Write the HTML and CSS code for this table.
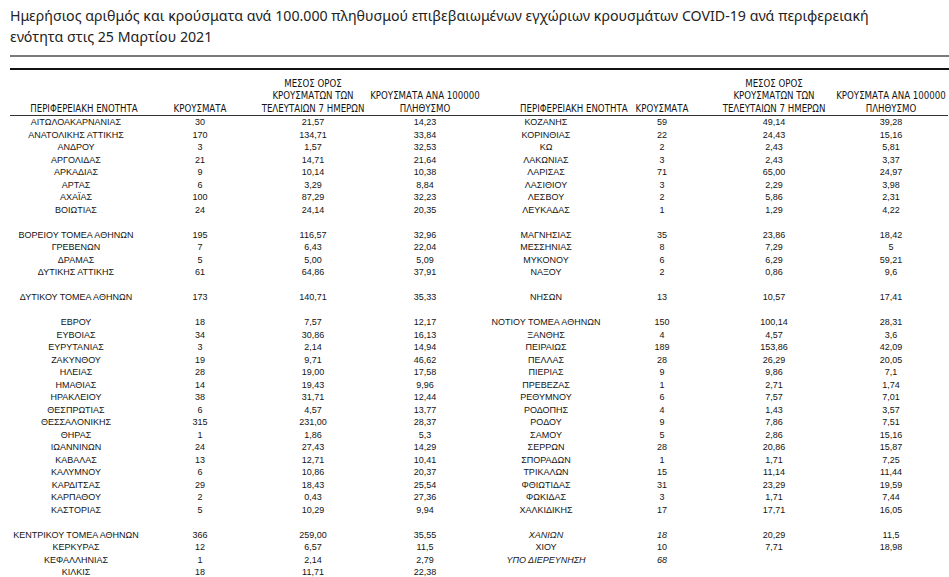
FILE: index.html
```html
<!DOCTYPE html>
<html lang="el">
<head>
<meta charset="utf-8">
<title>Κρούσματα COVID-19 ανά περιφερειακή ενότητα</title>
<link rel="stylesheet" href="styles.css">
</head>
<body>
<div class="page">
  <h1 class="title">Ημερήσιος αριθμός και κρούσματα ανά 100.000 πληθυσμού επιβεβαιωμένων εγχώριων κρουσμάτων COVID-19 ανά περιφερειακή<br>ενότητα στις 25 Μαρτίου 2021</h1>
  <div class="rule rule-thin"></div>
  <div class="rule rule-thick"></div>
  <table class="data">
    <colgroup>
      <col class="c1"><col class="c2"><col class="c3"><col class="c4">
      <col class="c5"><col class="c6"><col class="c7"><col class="c8">
    </colgroup>
    <thead>
      <tr>
        <th class="h-name">ΠΕΡΙΦΕΡΕΙΑΚΗ ΕΝΟΤΗΤΑ</th>
        <th>ΚΡΟΥΣΜΑΤΑ</th>
        <th>ΜΕΣΟΣ ΟΡΟΣ<br>ΚΡΟΥΣΜΑΤΩΝ ΤΩΝ<br>ΤΕΛΕΥΤΑΙΩΝ 7 ΗΜΕΡΩΝ</th>
        <th>ΚΡΟΥΣΜΑΤΑ ΑΝΑ 100000<br>ΠΛΗΘΥΣΜΟ</th>
        <th class="h-name2">ΠΕΡΙΦΕΡΕΙΑΚΗ ΕΝΟΤΗΤΑ</th>
        <th>ΚΡΟΥΣΜΑΤΑ</th>
        <th>ΜΕΣΟΣ ΟΡΟΣ<br>ΚΡΟΥΣΜΑΤΩΝ ΤΩΝ<br>ΤΕΛΕΥΤΑΙΩΝ 7 ΗΜΕΡΩΝ</th>
        <th>ΚΡΟΥΣΜΑΤΑ ΑΝΑ 100000<br>ΠΛΗΘΥΣΜΟ</th>
      </tr>
    </thead>
    <tbody>
      <tr><td>ΑΙΤΩΛΟΑΚΑΡΝΑΝΙΑΣ</td><td>30</td><td>21,57</td><td>14,23</td><td>ΚΟΖΑΝΗΣ</td><td>59</td><td>49,14</td><td>39,28</td></tr>
      <tr><td>ΑΝΑΤΟΛΙΚΗΣ ΑΤΤΙΚΗΣ</td><td>170</td><td>134,71</td><td>33,84</td><td>ΚΟΡΙΝΘΙΑΣ</td><td>22</td><td>24,43</td><td>15,16</td></tr>
      <tr><td>ΑΝΔΡΟΥ</td><td>3</td><td>1,57</td><td>32,53</td><td>ΚΩ</td><td>2</td><td>2,43</td><td>5,81</td></tr>
      <tr><td>ΑΡΓΟΛΙΔΑΣ</td><td>21</td><td>14,71</td><td>21,64</td><td>ΛΑΚΩΝΙΑΣ</td><td>3</td><td>2,43</td><td>3,37</td></tr>
      <tr><td>ΑΡΚΑΔΙΑΣ</td><td>9</td><td>10,14</td><td>10,38</td><td>ΛΑΡΙΣΑΣ</td><td>71</td><td>65,00</td><td>24,97</td></tr>
      <tr><td>ΑΡΤΑΣ</td><td>6</td><td>3,29</td><td>8,84</td><td>ΛΑΣΙΘΙΟΥ</td><td>3</td><td>2,29</td><td>3,98</td></tr>
      <tr><td>ΑΧΑΪΑΣ</td><td>100</td><td>87,29</td><td>32,23</td><td>ΛΕΣΒΟΥ</td><td>2</td><td>5,86</td><td>2,31</td></tr>
      <tr><td>ΒΟΙΩΤΙΑΣ</td><td>24</td><td>24,14</td><td>20,35</td><td>ΛΕΥΚΑΔΑΣ</td><td>1</td><td>1,29</td><td>4,22</td></tr>
      <tr><td></td><td></td><td></td><td></td><td></td><td></td><td></td><td></td></tr>
      <tr><td>ΒΟΡΕΙΟΥ ΤΟΜΕΑ ΑΘΗΝΩΝ</td><td>195</td><td>116,57</td><td>32,96</td><td>ΜΑΓΝΗΣΙΑΣ</td><td>35</td><td>23,86</td><td>18,42</td></tr>
      <tr><td>ΓΡΕΒΕΝΩΝ</td><td>7</td><td>6,43</td><td>22,04</td><td>ΜΕΣΣΗΝΙΑΣ</td><td>8</td><td>7,29</td><td>5</td></tr>
      <tr><td>ΔΡΑΜΑΣ</td><td>5</td><td>5,00</td><td>5,09</td><td>ΜΥΚΟΝΟΥ</td><td>6</td><td>6,29</td><td>59,21</td></tr>
      <tr><td>ΔΥΤΙΚΗΣ ΑΤΤΙΚΗΣ</td><td>61</td><td>64,86</td><td>37,91</td><td>ΝΑΞΟΥ</td><td>2</td><td>0,86</td><td>9,6</td></tr>
      <tr><td></td><td></td><td></td><td></td><td></td><td></td><td></td><td></td></tr>
      <tr><td>ΔΥΤΙΚΟΥ ΤΟΜΕΑ ΑΘΗΝΩΝ</td><td>173</td><td>140,71</td><td>35,33</td><td>ΝΗΣΩΝ</td><td>13</td><td>10,57</td><td>17,41</td></tr>
      <tr><td></td><td></td><td></td><td></td><td></td><td></td><td></td><td></td></tr>
      <tr><td>ΕΒΡΟΥ</td><td>18</td><td>7,57</td><td>12,17</td><td>ΝΟΤΙΟΥ ΤΟΜΕΑ ΑΘΗΝΩΝ</td><td>150</td><td>100,14</td><td>28,31</td></tr>
      <tr><td>ΕΥΒΟΙΑΣ</td><td>34</td><td>30,86</td><td>16,13</td><td>ΞΑΝΘΗΣ</td><td>4</td><td>4,57</td><td>3,6</td></tr>
      <tr><td>ΕΥΡΥΤΑΝΙΑΣ</td><td>3</td><td>2,14</td><td>14,94</td><td>ΠΕΙΡΑΙΩΣ</td><td>189</td><td>153,86</td><td>42,09</td></tr>
      <tr><td>ΖΑΚΥΝΘΟΥ</td><td>19</td><td>9,71</td><td>46,62</td><td>ΠΕΛΛΑΣ</td><td>28</td><td>26,29</td><td>20,05</td></tr>
      <tr><td>ΗΛΕΙΑΣ</td><td>28</td><td>19,00</td><td>17,58</td><td>ΠΙΕΡΙΑΣ</td><td>9</td><td>9,86</td><td>7,1</td></tr>
      <tr><td>ΗΜΑΘΙΑΣ</td><td>14</td><td>19,43</td><td>9,96</td><td>ΠΡΕΒΕΖΑΣ</td><td>1</td><td>2,71</td><td>1,74</td></tr>
      <tr><td>ΗΡΑΚΛΕΙΟΥ</td><td>38</td><td>31,71</td><td>12,44</td><td>ΡΕΘΥΜΝΟΥ</td><td>6</td><td>7,57</td><td>7,01</td></tr>
      <tr><td>ΘΕΣΠΡΩΤΙΑΣ</td><td>6</td><td>4,57</td><td>13,77</td><td>ΡΟΔΟΠΗΣ</td><td>4</td><td>1,43</td><td>3,57</td></tr>
      <tr><td>ΘΕΣΣΑΛΟΝΙΚΗΣ</td><td>315</td><td>231,00</td><td>28,37</td><td>ΡΟΔΟΥ</td><td>9</td><td>7,86</td><td>7,51</td></tr>
      <tr><td>ΘΗΡΑΣ</td><td>1</td><td>1,86</td><td>5,3</td><td>ΣΑΜΟΥ</td><td>5</td><td>2,86</td><td>15,16</td></tr>
      <tr><td>ΙΩΑΝΝΙΝΩΝ</td><td>24</td><td>27,43</td><td>14,29</td><td>ΣΕΡΡΩΝ</td><td>28</td><td>20,86</td><td>15,87</td></tr>
      <tr><td>ΚΑΒΑΛΑΣ</td><td>13</td><td>12,71</td><td>10,41</td><td>ΣΠΟΡΑΔΩΝ</td><td>1</td><td>1,71</td><td>7,25</td></tr>
      <tr><td>ΚΑΛΥΜΝΟΥ</td><td>6</td><td>10,86</td><td>20,37</td><td>ΤΡΙΚΑΛΩΝ</td><td>15</td><td>11,14</td><td>11,44</td></tr>
      <tr><td>ΚΑΡΔΙΤΣΑΣ</td><td>29</td><td>18,43</td><td>25,54</td><td>ΦΘΙΩΤΙΔΑΣ</td><td>31</td><td>23,29</td><td>19,59</td></tr>
      <tr><td>ΚΑΡΠΑΘΟΥ</td><td>2</td><td>0,43</td><td>27,36</td><td>ΦΩΚΙΔΑΣ</td><td>3</td><td>1,71</td><td>7,44</td></tr>
      <tr><td>ΚΑΣΤΟΡΙΑΣ</td><td>5</td><td>10,29</td><td>9,94</td><td>ΧΑΛΚΙΔΙΚΗΣ</td><td>17</td><td>17,71</td><td>16,05</td></tr>
      <tr><td></td><td></td><td></td><td></td><td></td><td></td><td></td><td></td></tr>
      <tr><td>ΚΕΝΤΡΙΚΟΥ ΤΟΜΕΑ ΑΘΗΝΩΝ</td><td>366</td><td>259,00</td><td>35,55</td><td class="it">ΧΑΝΙΩΝ</td><td class="it">18</td><td>20,29</td><td>11,5</td></tr>
      <tr><td>ΚΕΡΚΥΡΑΣ</td><td>12</td><td>6,57</td><td>11,5</td><td>ΧΙΟΥ</td><td>10</td><td>7,71</td><td>18,98</td></tr>
      <tr><td>ΚΕΦΑΛΛΗΝΙΑΣ</td><td>1</td><td>2,14</td><td>2,79</td><td class="it">ΥΠΟ ΔΙΕΡΕΥΝΗΣΗ</td><td class="it">68</td><td></td><td></td></tr>
      <tr><td>ΚΙΛΚΙΣ</td><td>18</td><td>11,71</td><td>22,38</td><td></td><td></td><td></td><td></td></tr>
    </tbody>
  </table>
</div>
</body>
</html>
```
FILE: styles.css
```css
html, body {
  margin: 0;
  padding: 0;
  background: #ffffff;
}
.page {
  padding: 6px 0 0 10px;
  color: #1c1c1c;
}
.title {
  margin: 0;
  font-family: "Noto Sans", "Open Sans", sans-serif;
  font-weight: normal;
  font-size: 14.2px;
  line-height: 20.5px;
  color: #222222;
}
.rule-thin {
  margin-top: 8px;
  height: 0;
  border-top: 2px solid #7a7a7a;
}
.rule-thick {
  margin-top: 11px;
  height: 0;
  border-top: 2px solid #111111;
}
.data {
  table-layout: fixed;
  border-collapse: collapse;
  width: 938px;
  font-family: "Liberation Sans", Arial, sans-serif;
  font-size: 9px;
  color: #141414;
}
.c1 { width: 132px; }
.c2 { width: 116px; }
.c3 { width: 110px; }
.c4 { width: 114px; }
.c5 { width: 128px; }
.c6 { width: 104px; }
.c7 { width: 120px; }
.c8 { width: 114px; }
.data th {
  font-family: "Liberation Sans Narrow", "DejaVu Sans Condensed", "Liberation Sans", sans-serif;
  font-weight: normal;
  font-size: 9.6px;
  line-height: 12.5px;
  height: 45px;
  padding: 0;
  vertical-align: bottom;
  text-align: center;
  white-space: nowrap;
  border-bottom: 1px solid #333333;
}
.data th.h-name { padding-left: 16px; }
.data th.h-name2 { padding-left: 38px; }
.data td {
  height: 12.5px;
  line-height: 12.5px;
  padding: 0;
  text-align: center;
  vertical-align: middle;
  white-space: nowrap;
}
.data td.it { font-style: italic; }
```
